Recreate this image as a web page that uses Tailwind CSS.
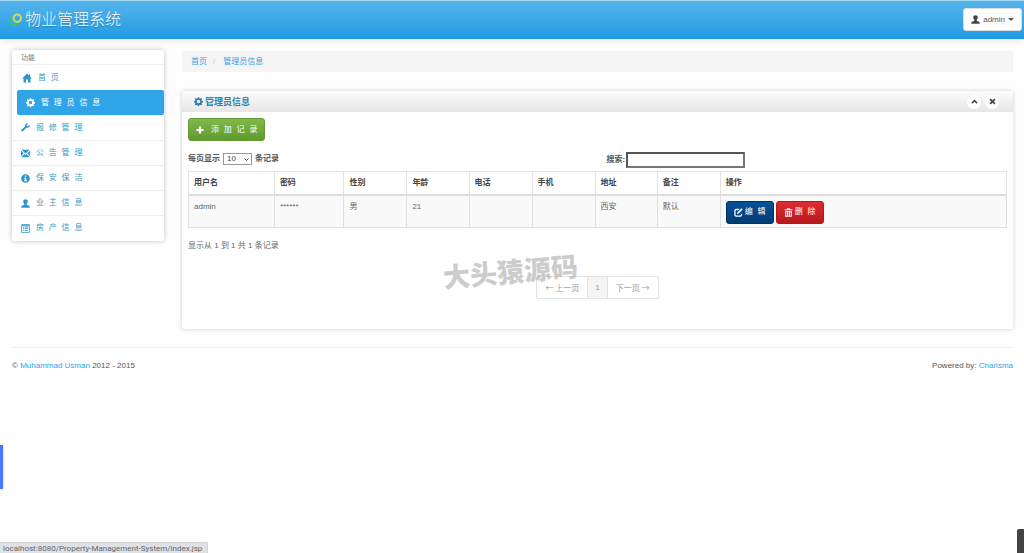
<!DOCTYPE html>
<html lang="zh-CN">
<head>
<meta charset="utf-8">
<meta name="viewport" content="width=device-width, initial-scale=1">
<title>物业管理系统</title>
<script src="https://cdn.jsdelivr.net/npm/@tailwindcss/browser@4"></script>
</head>
<body class="relative min-h-screen overflow-hidden bg-[#fefefe] font-['Liberation_Sans','Noto_Sans_CJK_SC',sans-serif] text-[8px] leading-[12px] text-[#666]">
<svg class="hidden" aria-hidden="true">
  <symbol id="home" viewBox="0 0 16 16"><path d="M8 0.8 0.3 8.7h2.2V15h4v-4.600h3V15h4V8.700h2.200L12.900 5.800V2h-2v1.800z"/></symbol>
  <symbol id="cog" viewBox="0 0 16 16"><path fill-rule="evenodd" d="M6.700 0.500h2.600l.4 2 1.300.55 1.700-1.150 1.850 1.850-1.150 1.700.55 1.250 2 .4v2.600l-2 .4-.55 1.300 1.150 1.700-1.850 1.850-1.700-1.150-1.300.55-.4 2H6.700l-.4-2-1.300-.55-1.700 1.150-1.850-1.850 1.150-1.700-.55-1.300-2-.4V7.100l2-.4.55-1.250-1.150-1.700L3.300 1.900 5 3.050l1.300-.55zM8 4.900a3.100 3.100 0 1 0 0 6.200 3.100 3.100 0 0 0 0-6.200z"/></symbol>
  <symbol id="wrench" viewBox="0 0 16 16"><path d="M15.500 3.200 12.900 5.800 10.600 5.300 10.100 3l2.600-2.600C10.500-.2 8.200.8 7.500 2.900c-.3.900-.2 1.800.1 2.700L.9 12.100c-.8.8-.8 1.800-.1 2.600.8.800 1.900.8 2.600 0L10 8.200c1 .4 2.200.4 3.300-.1 2-.9 2.800-3 2.200-4.900z"/></symbol>
  <symbol id="mail" viewBox="0 0 16 16"><path d="M.8 1.500h14.400L8 8zM0 3.200l4.700 4.500L0 12.800zM16 3.200l-4.700 4.500 4.700 5.100zM.8 14.500l5.100-5.600L8 10.700l2.100-1.800 5.100 5.600z"/></symbol>
  <symbol id="info" viewBox="0 0 16 16"><path fill-rule="evenodd" d="M8 .3a7.700 7.700 0 1 0 0 15.400A7.700 7.700 0 0 0 8 .3zM6.700 2.800h2.600v2.300H6.700zM5.600 6.500h3.800v4.700h1.100v1.700H5.600v-1.700h1.100V8.200H5.600z"/></symbol>
  <symbol id="user" viewBox="0 0 16 16"><path d="M8 .5C5.500.5 4 2 4 4.500c0 1.700.6 3.200 1.900 4.300.3.900 0 1.500-.8 1.900L1.700 12.200C.8 12.600.5 13.300.5 15v.5h15V15c0-1.700-.3-2.400-1.200-2.800l-3.400-1.500c-.8-.4-1.100-1-.8-1.900C11.400 7.700 12 6.200 12 4.500 12 2 10.500.5 8 .5z"/></symbol>
  <symbol id="list" viewBox="0 0 16 16"><path fill-rule="evenodd" d="M.5.500h15v15H.5zM2 3v11h12V3zM3.500 4.500h2V6h-2zM6.500 4.500h6V6h-6zM3.500 7.500h2V9h-2zM6.500 7.500h6V9h-6zM3.500 10.500h2V12h-2zM6.500 10.500h6V12h-6z"/></symbol>
  <symbol id="plus" viewBox="0 0 16 16"><path d="M5.800.8h4.400v5h5v4.400h-5v5H5.800v-5h-5V5.800h5z"/></symbol>
  <symbol id="edit" viewBox="0 0 16 16"><path d="M10 1.500H4A3.500 3.500 0 0 0 .5 5v7A3.500 3.500 0 0 0 4 15.500h7a3.500 3.500 0 0 0 3.500-3.500V9.500l-2.300 2.300c0 .8-.5 1.400-1.400 1.400H4.100c-.8 0-1.300-.5-1.300-1.300V5.100c0-.8.5-1.300 1.300-1.300h3.700zM13.300.6l2.200 2.200-7 7-3.300 1.100 1.100-3.300z"/></symbol>
  <symbol id="trash" viewBox="0 0 16 16"><path fill-rule="evenodd" d="M5.500 2V.5h5V2H15v2.200H1V2zM2 5.200h12v10.300H2zM4 6.500v7.200h1.300V6.500zM7.300 6.500v7.200h1.400V6.500zM10.700 6.500v7.200H12V6.500z"/></symbol>
  <symbol id="up" viewBox="0 0 16 16"><path d="M8 3.500 15 10.500 12.600 13 8 8.500 3.400 13 1 10.500z"/></symbol>
  <symbol id="close" viewBox="0 0 16 16"><path d="M3.800 1 8 5.200 12.200 1 15 3.800 10.800 8l4.200 4.200-2.800 2.800L8 10.800 3.800 15 1 12.200 5.200 8 1 3.800z"/></symbol>
</svg>

<header class="flex h-[39px] items-center justify-between border-t border-[#a9dcf6] border-b border-b-[#2a97d6] bg-linear-to-b from-[#54b4eb] to-[#1d9ce5] pr-[2px] pl-[9px] shadow-[0_1px_8px_rgba(0,0,0,0.1)]">
  <a href="#" class="flex items-center gap-[3px] font-['Liberation_Serif','Noto_Sans_CJK_SC',serif] text-[16px] leading-[20px] font-light text-white [text-shadow:0_1px_1px_rgba(0,0,0,0.25)]">
    <svg class="size-[13px]" viewBox="0 0 26 26" fill="none"><path d="M5 9C0 14 1 21 6 23s12-1 14-5" stroke="#35c477" stroke-width="5"/><circle cx="16.500" cy="10.500" r="7.500" stroke="#d8dc50" stroke-width="4"/></svg>
    物业管理系统
  </a>
  <button class="flex h-[23px] items-center gap-[3px] rounded-[3px] border border-[#ddd] bg-white px-[7px] text-[#555]">
    <svg class="size-[9px] fill-[#444]"><use href="#user"/></svg>admin
    <span class="border-x-[3px] border-t-[3px] border-x-transparent border-t-[#555]"></span>
  </button>
</header>

<div class="grid grid-cols-[152px_1fr] items-start gap-[18px] pt-[11px] pr-[11px] pl-[12px]">
  <nav class="rounded-[3px] bg-white pb-[1px] shadow-[0_0_5px_rgba(0,0,0,0.25)]">
    <div class="h-[15px] border-b border-[#f0f0f0] pl-[9px] text-[7px] leading-[15px] text-[#777]">功能</div>
    <ul class="font-['Liberation_Mono','Noto_Sans_CJK_SC',monospace] text-[#3b9ac6]">
      <li><a href="#" class="flex h-[25px] items-center gap-[6px] pl-[10px]"><svg class="size-[10px] fill-[#2b93cf]"><use href="#home"/></svg>首 页</a></li>
      <li><a href="#" class="ml-[5px] flex h-[25px] items-center gap-[6px] rounded-[2px] bg-[#2fa4e7] pl-[9px] text-white"><svg class="size-[9px] fill-white"><use href="#cog"/></svg>管 理 员 信 息</a></li>
      <li class="border-b border-[#eee]"><a href="#" class="flex h-[25px] items-center gap-[6px] pl-[9px]"><svg class="size-[9px] fill-[#2b93cf]"><use href="#wrench"/></svg>报 修 管 理</a></li>
      <li class="border-b border-[#eee]"><a href="#" class="flex h-[24px] items-center gap-[6px] pl-[9px]"><svg class="size-[9px] fill-[#2b93cf]"><use href="#mail"/></svg>公 告 管 理</a></li>
      <li class="border-b border-[#eee]"><a href="#" class="flex h-[24px] items-center gap-[6px] pl-[9px]"><svg class="size-[9px] fill-[#2b93cf]"><use href="#info"/></svg>保 安 保 洁</a></li>
      <li class="border-b border-[#eee]"><a href="#" class="flex h-[24px] items-center gap-[6px] pl-[9px]"><svg class="size-[9px] fill-[#2b93cf]"><use href="#user"/></svg>业 主 信 息</a></li>
      <li><a href="#" class="flex h-[24px] items-center gap-[6px] pl-[9px]"><svg class="size-[9px] fill-[#2b93cf]"><use href="#list"/></svg>房 产 信 息</a></li>
    </ul>
  </nav>

  <main class="min-w-0">
    <div class="mt-[1px] flex h-[21px] items-center gap-[6px] bg-[#f5f5f5] pl-[9px]">
      <a href="#" class="text-[#2fa4e7]">首页</a><span class="text-[#ccc]">/</span><a href="#" class="pl-[2px] text-[#2fa4e7]">管理员信息</a>
    </div>

    <section class="relative mt-[19px] h-[238px] rounded-[2px] bg-white shadow-[0_0_4px_rgba(0,0,0,0.2)]">
      <div class="flex h-[21px] items-center justify-between bg-linear-to-b from-[#fcfcfc] to-[#e6e6e6] pr-[14px] pl-[12px]">
        <h2 class="flex items-center gap-[2px] text-[9px] font-bold text-[#317eac]"><svg class="size-[9px] fill-current"><use href="#cog"/></svg>管理员信息</h2>
        <div class="flex gap-[4px]">
          <button aria-label="收起" class="flex size-[14px] items-center justify-center rounded-full bg-white"><svg class="size-[7px] fill-[#444]"><use href="#up"/></svg></button>
          <button aria-label="关闭" class="flex size-[14px] items-center justify-center rounded-full bg-white"><svg class="size-[7px] fill-[#444]"><use href="#close"/></svg></button>
        </div>
      </div>

      <div class="px-[6px] pt-[6px]">
        <button class="flex h-[23px] items-center gap-[7px] rounded-[3px] border border-[#649c30] bg-linear-to-b from-[#80b949] to-[#619a2f] px-[7px] font-['Liberation_Mono','Noto_Sans_CJK_SC',monospace] text-white"><svg class="size-[8px] fill-white"><use href="#plus"/></svg>添 加 记 录</button>

        <div class="mt-[10px] grid h-[20px] grid-cols-2 items-start font-bold text-[#555]">
          <label class="flex items-center gap-[3px] pt-[2px]">每页显示
            <span class="relative flex">
              <select class="h-[12px] w-[29px] appearance-none border border-[#999] bg-white pl-[3px] text-[8px] leading-[10px] font-normal text-[#444]"><option>10</option></select>
              <svg class="pointer-events-none absolute top-[4px] right-[3px] size-[5px]" viewBox="0 0 10 10" fill="none" stroke="#444" stroke-width="2"><path d="m1 3 4 4 4-4"/></svg>
            </span>条记录</label>
          <label class="flex items-center pt-[1px] pl-[9px]">搜索:<input type="text" class="ml-[1px] h-[16px] w-[119px] border-2 border-t-[#555] border-r-[#777] border-b-[#777] border-l-[#555] bg-white px-[2px] font-normal"></label>
        </div>

        <table class="w-full table-fixed border-collapse border border-[#e3e3e3] text-left [&_td]:border [&_td]:border-[#e0e0e0] [&_td]:px-[5px] [&_td]:pt-[5px] [&_th]:border [&_th]:border-[#e3e3e3] [&_th]:px-[5px] [&_th]:text-[#444]">
          <colgroup><col class="w-[10.500%]"><col class="w-[8.500%]"><col class="w-[7.700%]"><col class="w-[7.600%]"><col class="w-[7.700%]"><col class="w-[7.700%]"><col class="w-[7.600%]"><col class="w-[7.700%]"><col></colgroup>
          <thead><tr class="h-[23px] border-b-2 border-[#ddd]"><th>用户名</th><th>密码</th><th>性别</th><th>年龄</th><th>电话</th><th>手机</th><th>地址</th><th>备注</th><th>操作</th></tr></thead>
          <tbody><tr class="h-[33px] bg-[#f9f9f9] align-top"><td>admin</td><td>******</td><td>男</td><td>21</td><td></td><td></td><td>西安</td><td>默认</td><td>
            <div class="flex gap-[2px] font-['Liberation_Mono','Noto_Sans_CJK_SC',monospace] text-white">
              <button class="flex h-[23px] w-[48px] items-center justify-center gap-[2px] rounded-[3px] border border-[#033060] bg-linear-to-b from-[#04519b] to-[#033c73]"><svg class="size-[9px] fill-white"><use href="#edit"/></svg>编 辑</button>
              <button class="flex h-[23px] w-[48px] items-center justify-center gap-[2px] rounded-[3px] border border-[#b5171b] bg-linear-to-b from-[#e12b31] to-[#b8171c]"><svg class="size-[9px] fill-white"><use href="#trash"/></svg>删 除</button>
            </div></td></tr></tbody>
        </table>

        <p class="mt-[12px]">显示从 1 到 1 共 1 条记录</p>
        <div class="mt-[24px] flex justify-center text-[#999]">
          <div class="flex h-[23px] divide-x divide-[#e3e3e3] rounded-[2px] border border-[#e3e3e3] bg-white leading-[21px]">
            <a href="#" class="px-[8px] font-['Noto_Sans_CJK_SC',sans-serif]">← 上一页</a><a href="#" class="bg-[#f5f5f5] px-[7px]">1</a><a href="#" class="px-[8px] font-['Noto_Sans_CJK_SC',sans-serif]">下一页 →</a>
          </div>
        </div>
      </div>
      <div class="pointer-events-none absolute top-[164px] left-[261px] -rotate-5 text-[27px] leading-[36px] font-black whitespace-nowrap text-[#bbb]/75">大头猿源码</div>
    </section>
  </main>
</div>

<footer class="mt-[18px] mr-[11px] ml-[12px] flex justify-between border-t border-[#eee] pt-[12px] text-[#555]">
  <p>© <a href="#" class="text-[#2fa4e7]">Muhammad Usman</a> 2012 - 2015</p>
  <p>Powered by: <a href="#" class="text-[#2fa4e7]">Charisma</a></p>
</footer>

<div class="absolute top-[445px] left-0 h-[44px] w-[3px] bg-[#4876ff] shadow-[0_0_3px_rgba(0,0,0,0.2)]"></div>
<div class="absolute bottom-0 left-0 h-[11px] rounded-tr-[2px] border-t border-r border-[#cfd3d8] bg-[#dee1e6] pr-[5px] pl-[3px] font-['Roboto',sans-serif] leading-[12px]">localhost:8080/Property-Management-System/index.jsp</div>
<div class="absolute right-0 bottom-0 h-[24px] w-[7px] rounded-tl-[2px] bg-[#444]"></div>
</body>
</html>
